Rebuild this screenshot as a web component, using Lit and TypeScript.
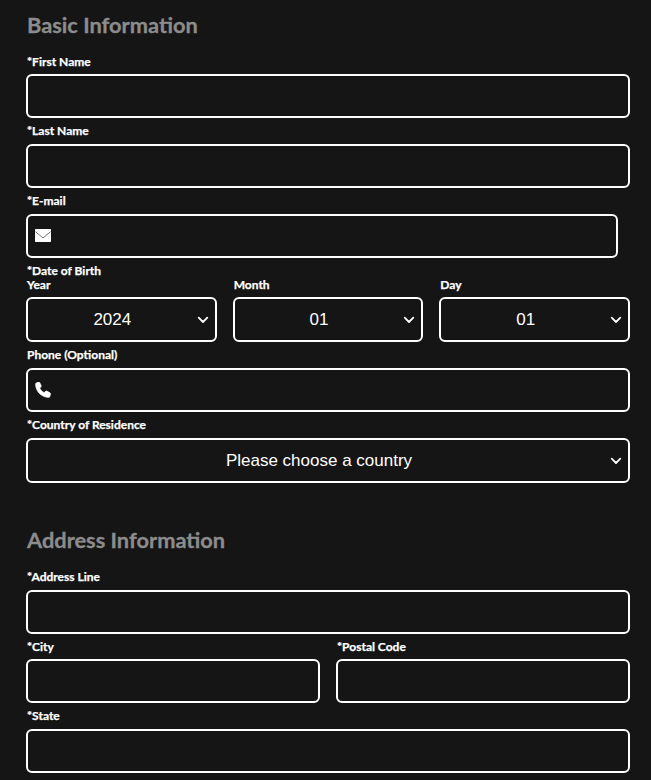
import { LitElement, html, css } from "lit";
import { customElement } from "lit/decorators.js";

const chevron = html`<svg class="chev" width="12" height="8" viewBox="0 0 12 8" aria-hidden="true"><path d="M1.700 1.700 6 6l4.300-4.300" fill="none" stroke="#fff" stroke-width="1.800" stroke-linecap="round" stroke-linejoin="round"/></svg>`;

const mail = html`<svg class="icon" width="16" height="13" viewBox="0 0 16 13" aria-hidden="true"><path d="M1 0h14c.6 0 1 .4 1 1v11c0 .6-.4 1-1 1H1c-.6 0-1-.4-1-1V1c0-.6.4-1 1-1Z" fill="#fff"/><path d="M.3 2.600 8 8.900l7.700-6.300" fill="none" stroke="#555" stroke-width=".8"/></svg>`;

const phone = html`<svg class="icon ph" width="16" height="16" viewBox="0 0 16 16" aria-hidden="true"><path d="M4.600.4 6.200 3.700c.2.400.1.800-.2 1.100L4.700 6c.9 2 2.500 3.700 4.500 4.700l1.300-1.400c.3-.3.800-.4 1.200-.2l3.300 1.700c.4.200.6.700.5 1.100l-.7 2.700c-.1.500-.6.800-1 .8C6.500 15.400.6 9.300.6 2 .6 1.500.9 1.100 1.400.9L3.500.1c.5-.2.900 0 1.100.3Z" fill="#fff" stroke="#fff" stroke-width=".7" stroke-linejoin="round"/></svg>`;

@customElement("app-root")
export class AppRoot extends LitElement {
  static styles = css`
    :host {
      display: block;
      height: 780px;
      overflow: hidden;
      background: #151515;
      box-sizing: border-box;
      padding: 13px 21px 0 26px;
      font-family: Lato, sans-serif;
      color: #fff;
    }
    h2 {
      margin: 0 1px 18px;
      font-size: 21.800px;
      line-height: 24px;
      font-weight: 700;
      color: #8c8c8c;
      -webkit-text-stroke: 0.3px #8c8c8c;
    }
    h2.second { margin: 45px 1px 18px; }
    .field { margin-bottom: 6px; }
    .label {
      display: block;
      margin: 0 1px 6px;
      font-size: 12px;
      line-height: 14px;
      font-weight: 700;
      color: #fff;
      -webkit-text-stroke: 0.25px #fff;
    }
    .label.top { margin-bottom: 0; }
    .label.tight { margin-bottom: 5px; }
    .first .label { margin-bottom: 5px; }
    .row { display: grid; gap: 16px; }
    .three { grid-template-columns: repeat(3, 1fr); }
    .two { grid-template-columns: repeat(2, 1fr); }
    .control {
      position: relative;
      display: block;
    }
    .narrow { width: 592px; }
    input, select {
      display: block;
      width: 100%;
      box-sizing: border-box;
      height: 44px;
      margin: 0;
      border: 2px solid #fff;
      border-radius: 6px;
      background: #151515;
      color: #fff;
      outline: none;
      font-family: "Liberation Sans", Arial, sans-serif;
      font-size: 17px;
    }
    input { padding: 6px 12px; }
    input.with-icon { padding-left: 40px; }
    select {
      height: 45px;
      appearance: none;
      -webkit-appearance: none;
      padding: 0 32px 0 14px;
      text-align: center;
      text-align-last: center;
    }
    .chev {
      position: absolute;
      right: 8px;
      top: 19px;
      pointer-events: none;
    }
    .icon {
      position: absolute;
      left: 9px;
      top: 15px;
    }
    .icon.ph { top: 14px; }
  `;

  private field(label: string, extra = "") {
    return html`<div class="field ${extra}"><label class="label">${label}</label><span class="control"><input type="text" /></span></div>`;
  }

  private dateSelect(label: string, value: string) {
    return html`<div>
      <label class="label tight">${label}</label>
      <span class="control"><select><option>${value}</option></select>${chevron}</span>
    </div>`;
  }

  render() {
    return html`
      <h2>Basic Information</h2>
      ${this.field("*First Name", "first")}
      ${this.field("*Last Name")}
      <div class="field">
        <label class="label">*E-mail</label>
        <span class="control narrow"><input class="with-icon" type="email" />${mail}</span>
      </div>
      <div class="field">
        <span class="label top">*Date of Birth</span>
        <div class="row three">
          ${this.dateSelect("Year", "2024")}
          ${this.dateSelect("Month", "01")}
          ${this.dateSelect("Day", "01")}
        </div>
      </div>
      <div class="field">
        <label class="label">Phone (Optional)</label>
        <span class="control"><input class="with-icon" type="tel" />${phone}</span>
      </div>
      <div class="field">
        <label class="label">*Country of Residence</label>
        <span class="control"><select><option>Please choose a country</option></select>${chevron}</span>
      </div>
      <h2 class="second">Address Information</h2>
      ${this.field("*Address Line")}
      <div class="row two field first">
        <div><label class="label">*City</label><input type="text" /></div>
        <div><label class="label">*Postal Code</label><input type="text" /></div>
      </div>
      ${this.field("*State")}
    `;
  }
}
